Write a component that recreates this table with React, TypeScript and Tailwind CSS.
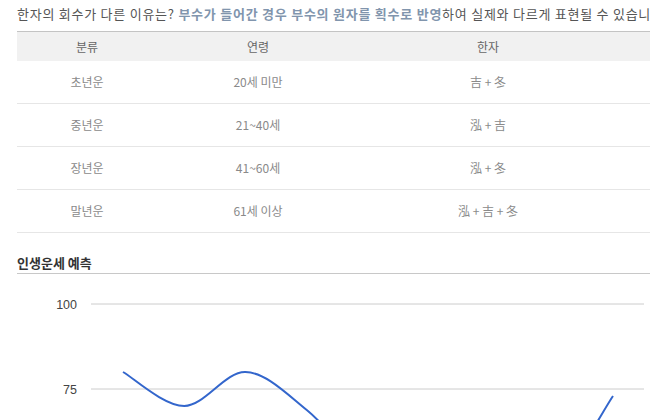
const rows = [
  { kind: "초년운", age: "20세 미만", hanja: "吉 + 冬" },
  { kind: "중년운", age: "21~40세", hanja: "泓 + 吉" },
  { kind: "장년운", age: "41~60세", hanja: "泓 + 冬" },
  { kind: "말년운", age: "61세 이상", hanja: "泓 + 吉 + 冬" },
];

const values = [371, 405, 371, 409, 470, 500, 500, 485, 395];

function smoothPath(pts: [number, number][]) {
  let d = `M ${pts[0][0]} ${pts[0][1]}`;
  for (let i = 0; i < pts.length - 1; i++) {
    const p0 = pts[i - 1] ?? pts[i];
    const p1 = pts[i];
    const p2 = pts[i + 1];
    const p3 = pts[i + 2] ?? p2;
    const c1x = p1[0] + (p2[0] - p0[0]) / 6;
    const c1y = p1[1] + (p2[1] - p0[1]) / 6;
    const c2x = p2[0] - (p3[0] - p1[0]) / 6;
    const c2y = p2[1] - (p3[1] - p1[1]) / 6;
    d += ` C ${c1x} ${c1y}, ${c2x} ${c2y}, ${p2[0]} ${p2[1]}`;
  }
  return d;
}

const LifeChart = () => {
  // chart top sits at page y=273, left at page x=17
  const pts = values.map((v, i) => [123 + 61.25 * i - 17, v - 273] as [number, number]);
  return (
    <svg width="633" height="160" className="block">
      <line x1="74" y1="30" x2="627" y2="30" stroke="#cccccc" strokeWidth="1" />
      <line x1="74" y1="115" x2="627" y2="115" stroke="#cccccc" strokeWidth="1" />
      <text x="60" y="34.5" textAnchor="end" fontSize="12.5" fill="#444" fontFamily="'Liberation Sans', Arial, sans-serif">
        100
      </text>
      <text x="60" y="119.5" textAnchor="end" fontSize="12.5" fill="#444" fontFamily="'Liberation Sans', Arial, sans-serif">
        75
      </text>
      <path d={smoothPath(pts)} fill="none" stroke="#3366cc" strokeWidth="2" />
    </svg>
  );
};

export default function App() {
  return (
    <div className="w-[650px] h-[420px] overflow-hidden bg-white font-['Noto_Sans_CJK_KR',sans-serif]">
      <div className="pl-[17px] w-[760px]">
        <p className="h-[31px] pt-[5px] text-[13px] leading-[18px] text-[#555] whitespace-nowrap tracking-[0.75px]">
          한자의 회수가 다른 이유는?{" "}
          <b className="font-bold text-[#8195ad]">부수가 들어간 경우 부수의 원자를 획수로 반영</b>하여 실제와 다르게
          표현될 수 있습니다.
        </p>
        <div className="border-t border-[#c4c4c4]">
          <div className="grid grid-cols-[140px_202px_258px_1fr] h-[29px] bg-[#f1f1f1] text-[12px] text-[#666] items-center text-center">
            <span>분류</span>
            <span>연령</span>
            <span>한자</span>
            <span></span>
          </div>
          {rows.map((r) => (
            <div
              key={r.kind}
              className="grid grid-cols-[140px_202px_258px_1fr] h-[43px] border-b border-[#e6e6e6] text-[12px] text-[#8a8a8a] items-center text-center"
            >
              <span>{r.kind}</span>
              <span>{r.age}</span>
              <span>{r.hanja}</span>
              <span></span>
            </div>
          ))}
        </div>
        <h3 className="mt-[21px] h-[20px] text-[13px] font-bold text-[#333] leading-[18px] border-b border-[#c8c8c8] w-[633px]">
          인생운세 예측
        </h3>
        <LifeChart />
      </div>
    </div>
  );
}
